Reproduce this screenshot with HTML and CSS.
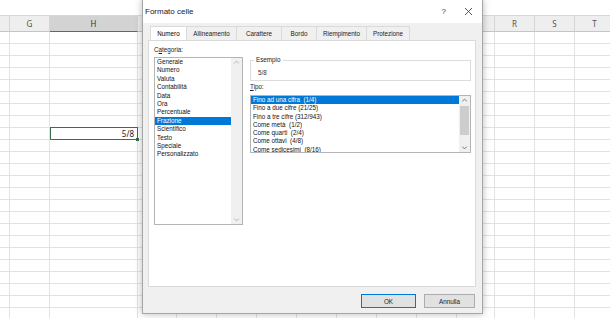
FILE: index.html
```html
<!DOCTYPE html>
<html lang="it">

<head>
    <meta charset="UTF-8">
    <title>Formato celle</title>
    <link rel="stylesheet" href="styles.css">
</head>

<body>
    <div class="sheet">
        <div class="topbar"></div>
        <div class="colheads"></div>
        <div class="rows"></div>
    </div>

    <div class="dialog">
        <div class="titlebar">
            <span class="title">Formato celle</span>
            <span class="help">?</span>
            <svg class="close" width="9" height="9" viewBox="0 0 9 9">
                <path d="M1 1 L8 8 M8 1 L1 8" stroke="#444" stroke-width="0.9" fill="none" />
            </svg>
        </div>

        <div class="tabs">
            <div class="tab active" style="width:37px">Numero</div>
            <div class="tab" style="width:50px">Allineamento</div>
            <div class="tab" style="width:45px">Carattere</div>
            <div class="tab" style="width:35px">Bordo</div>
            <div class="tab" style="width:50px">Riempimento</div>
            <div class="tab" style="width:43px">Protezione</div>
        </div>

        <div class="panel">
            <div class="left">
                <div class="label">C<u>a</u>tegoria:</div>
                <div class="list cats">
                    <div class="items">
                        <div class="item">Generale</div>
                        <div class="item">Numero</div>
                        <div class="item">Valuta</div>
                        <div class="item">Contabilità</div>
                        <div class="item">Data</div>
                        <div class="item">Ora</div>
                        <div class="item">Percentuale</div>
                        <div class="item selected">Frazione</div>
                        <div class="item">Scientifico</div>
                        <div class="item">Testo</div>
                        <div class="item">Speciale</div>
                        <div class="item">Personalizzato</div>
                    </div>
                    <div class="scroll">
                        <svg class="arrow" width="12" height="9" viewBox="0 0 12 9">
                            <path d="M3.5 5.5 L6 3 L8.5 5.5" stroke="#a6a6a6" stroke-width="0.9" fill="none" />
                        </svg>
                        <div class="track"></div>
                        <svg class="arrow" width="12" height="9" viewBox="0 0 12 9">
                            <path d="M3.5 3.5 L6 6 L8.5 3.5" stroke="#a6a6a6" stroke-width="0.9" fill="none" />
                        </svg>
                    </div>
                </div>
            </div>

            <div class="right">
                <fieldset class="sample">
                    <legend>Esempio</legend>
                    <div class="sample-value">5/8</div>
                </fieldset>

                <div class="label"><u>T</u>ipo:</div>
                <div class="list types">
                    <div class="items">
                        <div class="item selected">Fino ad una cifra&nbsp; (1/4)</div>
                        <div class="item">Fino a due cifre (21/25)</div>
                        <div class="item">Fino a tre cifre (312/943)</div>
                        <div class="item">Come metà&nbsp; (1/2)</div>
                        <div class="item">Come quarti&nbsp; (2/4)</div>
                        <div class="item">Come ottavi&nbsp; (4/8)</div>
                        <div class="item">Come sedicesimi&nbsp; (8/16)</div>
                    </div>
                    <div class="scroll">
                        <svg class="arrow" width="12" height="9" viewBox="0 0 12 9">
                            <path d="M3.5 5.5 L6 3 L8.5 5.5" stroke="#606060" stroke-width="0.9" fill="none" />
                        </svg>
                        <div class="track">
                            <div class="thumb"></div>
                        </div>
                        <svg class="arrow" width="12" height="9" viewBox="0 0 12 9">
                            <path d="M3.5 3.5 L6 6 L8.5 3.5" stroke="#606060" stroke-width="0.9" fill="none" />
                        </svg>
                    </div>
                </div>
            </div>
        </div>

        <div class="footer">
            <button class="btn ok">OK</button>
            <button class="btn cancel">Annulla</button>
        </div>
    </div>

    <script>
        // colonne visibili del foglio (lettera, larghezza) - la F è quasi tutta fuori schermo
        const cols = [["", 40], ["G", 40], ["H", 88], ["I", 39], ["J", 40], ["K", 40], ["L", 40],
            ["M", 40], ["N", 40], ["O", 40], ["P", 40], ["Q", 38], ["R", 40], ["S", 40], ["T", 40]];

        let heads = document.querySelector(".colheads");
        let rows = document.querySelector(".rows");

        cols.forEach(col => {
            let h = document.createElement("div");
            h.className = "colhead";
            if (col[0] == "H") h.classList.add("sel");
            h.style.width = col[1] + "px";
            h.textContent = col[0];
            heads.appendChild(h);
        });

        for (let r = 0; r < 24; r++) {
            let row = document.createElement("div");
            row.className = "row";
            cols.forEach(col => {
                let c = document.createElement("div");
                c.className = "cell";
                c.style.width = col[1] + "px";
                if (r == 8 && col[0] == "H") {
                    c.classList.add("active");
                    c.textContent = "5/8";
                }
                row.appendChild(c);
            });
            rows.appendChild(row);
        }
    </script>
</body>

</html>
```

FILE: styles.css
```css
body {
    margin: 0;
    width: 610px;
    height: 318px;
    overflow: hidden;
    position: relative;
    background-color: white;
    font-family: "Liberation Sans", Arial, sans-serif;
}

/* foglio */

.sheet {
    margin-left: -30px;
}

.topbar {
    height: 15px;
    border-bottom: 1px solid #d8d8d8;
}

.colheads,
.row {
    display: flex;
}

.colhead {
    flex: none;
    box-sizing: border-box;
    height: 16px;
    background-color: #eeeeee;
    border-right: 1px solid #d4d4d4;
    border-bottom: 1px solid #c4c4c4;
    text-align: center;
    font-family: "Noto Sans", sans-serif;
    font-size: 8px;
    line-height: 15px;
    color: #555;
}

.colhead.sel {
    background-color: #d3d3d3;
    border-bottom-color: #3f7b57;
    color: #333;
}

.row {
    height: 12px;
}

.cell {
    flex: none;
    box-sizing: border-box;
    position: relative;
    border-right: 1px solid #e2e2e2;
    border-bottom: 1px solid #e2e2e2;
    font-family: "Noto Sans", sans-serif;
    font-size: 8px;
    line-height: 11px;
    text-align: right;
    padding-right: 3px;
    color: #222;
}

.cell.active::after {
    content: "";
    position: absolute;
    left: 0;
    top: -1px;
    right: -1px;
    bottom: -1px;
    border: 1px solid #3a6e4f;
}

.cell.active::before {
    content: "";
    position: absolute;
    right: -2px;
    bottom: -2px;
    width: 3px;
    height: 3px;
    background-color: #2d6a45;
    z-index: 1;
}

/* finestra */

.dialog {
    position: absolute;
    left: 142px;
    top: -1px;
    width: 341px;
    height: 315px;
    box-sizing: border-box;
    display: flex;
    flex-direction: column;
    background-color: #f0f0f0;
    border: 1px solid #a6a6a6;
    box-shadow: 0 0 7px rgba(0, 0, 0, 0.28);
    font-size: 6.3px;
    color: #111;
}

.titlebar {
    height: 23px;
    flex: none;
    display: flex;
    align-items: center;
    background-color: white;
    padding-left: 2px;
}

.title {
    font-size: 8px;
    flex: 1;
    color: #222;
}

.help {
    font-size: 8px;
    color: #444;
    margin-right: 18px;
}

.close {
    margin-right: 9px;
}

.tabs {
    display: flex;
    margin: 3px 0 0 7px;
    height: 14px;
}

.tab {
    box-sizing: border-box;
    border: 1px solid #dadada;
    border-bottom: none;
    border-left: none;
    text-align: center;
    line-height: 13px;
    color: #222;
}

.tab.active {
    background-color: white;
    border-left: 1px solid #dadada;
    color: #000;
}

.panel {
    height: 247px;
    box-sizing: border-box;
    margin: 0 6px 0 5px;
    padding: 5px 4px 0 5px;
    background-color: white;
    border: 1px solid #dadada;
    display: grid;
    grid-template-columns: 89px 1fr;
    column-gap: 7px;
    align-items: start;
}

.label {
    height: 11px;
    line-height: 8px;
    color: #222;
}

.list {
    box-sizing: border-box;
    display: flex;
    border: 1px solid #b4b4b4;
    background-color: white;
}

.cats {
    height: 168px;
}

.types {
    height: 58px;
}

.items {
    flex: 1;
    overflow: hidden;
}

.item {
    line-height: 8.4px;
    height: 8.4px;
    padding-left: 2px;
    white-space: nowrap;
    color: #111;
}

.types .item {
    line-height: 8.3px;
    height: 8.3px;
}

.item.selected {
    background-color: #0078d7;
    color: white;
}

.scroll {
    width: 11px;
    display: flex;
    flex-direction: column;
    background-color: #f0f0f0;
}

.arrow {
    width: 11px;
    height: 9px;
    flex: none;
}

.track {
    flex: 1;
    padding: 1px 1px;
}

.thumb {
    height: 29px;
    background-color: #cdcdcd;
}

.sample {
    box-sizing: border-box;
    height: 25px;
    margin: 10px 0 0 0;
    padding: 0 0 0 3px;
    border: 1px solid #dcdcdc;
}

.sample legend {
    padding: 0 2px;
    line-height: 8px;
    color: #222;
}

.sample-value {
    margin: 5px 0 0 4px;
    line-height: 8px;
    color: #333;
}

.right .label {
    margin-top: 2px;
    height: 12px;
}

.footer {
    display: flex;
    justify-content: flex-end;
    gap: 8px;
    padding: 7px 7px 0 0;
}

.btn {
    height: 14px;
    box-sizing: border-box;
    padding: 0;
    font-family: inherit;
    font-size: 6.3px;
    color: #222;
    background-color: #e1e1e1;
    border: 1px solid #adadad;
}

.btn.ok {
    width: 55px;
    border-color: #0078d7;
}

.btn.cancel {
    width: 51px;
}
```
